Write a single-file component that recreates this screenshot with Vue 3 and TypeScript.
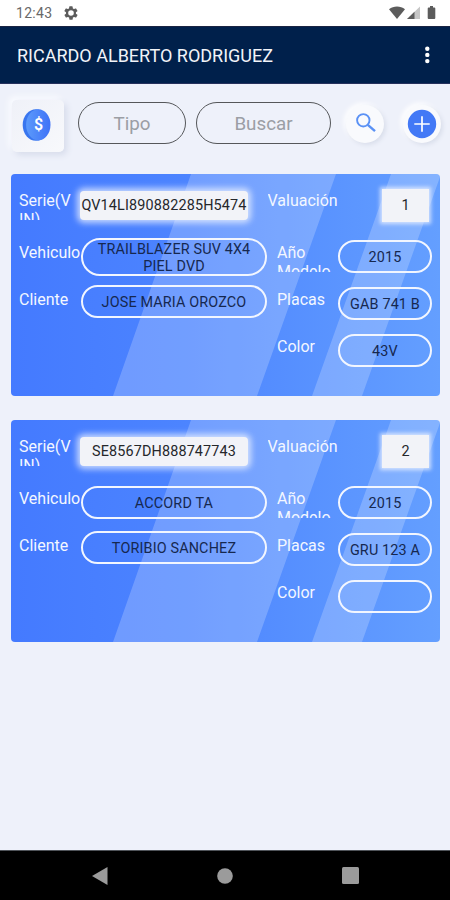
<script setup lang="ts">
interface Vehicle {
  serial: string
  valuation: string
  vehicle: string
  client: string
  year: string
  plates: string
  color: string
}

const vehicles: Vehicle[] = [
  {
    serial: 'QV14LI890882285H5474',
    valuation: '1',
    vehicle: 'TRAILBLAZER SUV 4X4 PIEL DVD',
    client: 'JOSE MARIA OROZCO',
    year: '2015',
    plates: 'GAB 741 B',
    color: '43V',
  },
  {
    serial: 'SE8567DH888747743',
    valuation: '2',
    vehicle: 'ACCORD TA',
    client: 'TORIBIO SANCHEZ',
    year: '2015',
    plates: 'GRU 123 A',
    color: '',
  },
]
</script>

<template>
  <div class="screen">
    <div class="status">
      <span class="clock">12:43</span>
      <svg class="gear" viewBox="0 0 24 24" width="16" height="16">
        <path fill="#5c5c5c" fill-rule="evenodd" d="M19.4 13a7.500 7.500 0 0 0 0-2l2.100-1.600a.5.5 0 0 0 .1-.7l-2-3.400a.5.5 0 0 0-.6-.2l-2.500 1a7.300 7.300 0 0 0-1.700-1l-.4-2.600a.5.5 0 0 0-.5-.5h-4a.5.5 0 0 0-.5.5L9 5.100a7.700 7.700 0 0 0-1.700 1l-2.500-1a.5.5 0 0 0-.6.2l-2 3.400a.5.5 0 0 0 .1.7L4.500 11a7.900 7.900 0 0 0 0 2l-2.100 1.600a.5.5 0 0 0-.1.7l2 3.400c.1.2.4.3.6.2l2.500-1a7.300 7.300 0 0 0 1.700 1l.4 2.600c0 .3.2.5.5.5h4c.3 0 .5-.2.500-.5l.4-2.600a7.700 7.700 0 0 0 1.700-1l2.500 1c.2.1.5 0 .6-.2l2-3.400a.5.5 0 0 0-.1-.7zM12 16.200a4.200 4.200 0 1 1 0-8.400a4.200 4.200 0 0 1 0 8.400z" />
      </svg>
      <svg class="signals" viewBox="0 0 50 16" width="50" height="16">
        <path fill="#5c5c5c" d="M0 4.200C4.500.7 11.500.7 16 4.200L8 14z" />
        <path fill="#c6c6c6" d="M31 1.500V14H18z" />
        <path fill="#5c5c5c" d="M25.500 6.800V14H18z" />
        <path fill="#5c5c5c" d="M41 1h3v1.500h1.300a1 1 0 0 1 1 1V13a1 1 0 0 1-1 1h-5.600a1 1 0 0 1-1-1V3.500a1 1 0 0 1 1-1H41z" />
      </svg>
    </div>

    <header class="appbar">
      <h1>RICARDO ALBERTO RODRIGUEZ</h1>
      <svg class="dots" viewBox="0 0 6 20" width="6" height="20">
        <circle cx="3.300" cy="3.700" r="2.200" /><circle cx="3.300" cy="9.900" r="2.200" /><circle cx="3.300" cy="16.100" r="2.200" />
      </svg>
    </header>

    <div class="toolbar">
      <button class="tile">
        <svg viewBox="0 0 30 34" width="30" height="34">
          <defs>
            <linearGradient id="coin" x1="0" x2="1" y1="0" y2="0">
              <stop offset="0" stop-color="#5b9afb" /><stop offset="1" stop-color="#3f72f7" />
            </linearGradient>
          </defs>
          <ellipse cx="14" cy="17" rx="13.300" ry="15.800" fill="#3976ef" />
          <ellipse cx="16.300" cy="16.800" rx="12.200" ry="15.600" fill="url(#coin)" />
          <text x="16.500" y="22.300" text-anchor="middle" fill="#fff" font-family="Roboto, sans-serif" font-size="16" font-weight="600">$</text>
        </svg>
      </button>
      <div class="input type">Tipo</div>
      <div class="input search">Buscar</div>
      <button class="round find">
        <svg viewBox="0 0 22 22" width="22" height="22" fill="none" stroke="#5a91f5">
          <circle cx="8.300" cy="8.300" r="6.200" stroke-width="1.900" />
          <path d="M12.800 12.800l7.200 6.400" stroke-width="2.400" />
        </svg>
      </button>
      <button class="round add">
        <svg viewBox="0 0 30 30" width="30" height="30">
          <circle cx="15" cy="15" r="14.200" fill="#4379f6" />
          <path d="M15 7.300v15.400M7.300 15h15.400" stroke="#fff" stroke-width="1.700" />
        </svg>
      </button>
    </div>

    <main class="list">
      <article v-for="v in vehicles" :key="v.serial" class="card">
        <svg class="stripes" viewBox="0 0 429 222" preserveAspectRatio="none">
          <defs>
            <linearGradient :id="'base' + v.valuation" x1="0" x2="1" y1="0" y2="0">
              <stop offset="0" stop-color="#447aff" /><stop offset=".4" stop-color="#4c84ff" />
              <stop offset="1" stop-color="#649fff" />
            </linearGradient>
          </defs>
          <path :fill="'url(#base' + v.valuation + ')'" d="M0 0h429v222H0z" />
          <path fill="#fff" fill-opacity=".21" d="M180 0H325L246 222H102zM380 0H429V3L351 222H301z" />
        </svg>
        <div class="head">
          <span class="label">Serie(V<br />IN)</span>
          <span class="serial">{{ v.serial }}</span>
          <span class="label valuation">Valuación</span>
          <span class="number">{{ v.valuation }}</span>
        </div>
        <div class="body">
          <div class="column left">
            <div class="row">
              <span class="label">Vehiculo</span>
              <span class="pill wide" :class="{ tall: v.vehicle.length > 20 }">{{ v.vehicle }}</span>
            </div>
            <div class="row">
              <span class="label">Cliente</span>
              <span class="pill wide client">{{ v.client }}</span>
            </div>
          </div>
          <div class="column right">
            <div class="row">
              <span class="label">Año<br />Modelo</span>
              <span class="pill">{{ v.year }}</span>
            </div>
            <div class="row">
              <span class="label">Placas</span>
              <span class="pill">{{ v.plates }}</span>
            </div>
            <div class="row">
              <span class="label">Color</span>
              <span class="pill">{{ v.color }}</span>
            </div>
          </div>
        </div>
      </article>
    </main>

    <nav class="navbar">
      <svg viewBox="0 0 16 18" width="16" height="18"><path d="M0 9L15.500 0v18z" /></svg>
      <svg viewBox="0 0 16 16" width="16" height="16"><circle cx="8" cy="8" r="7.800" /></svg>
      <svg viewBox="0 0 17 17" width="17" height="17"><rect width="17" height="17" rx="1.500" /></svg>
    </nav>
  </div>
</template>

<style>
body {
  margin: 0;
}
</style>

<style scoped>
* {
  box-sizing: border-box;
}
.screen {
  width: 450px;
  height: 900px;
  display: flex;
  flex-direction: column;
  background: #eef1fa;
  font-family: Roboto, "Liberation Sans", sans-serif;
  overflow: hidden;
}
.status {
  height: 26px;
  flex: none;
  display: flex;
  align-items: center;
  padding: 0 14px 0 16px;
  background: #fff;
}
.clock {
  width: 47px;
  font-size: 14px;
  letter-spacing: 0.3px;
  color: #696969;
}
.signals {
  margin-left: auto;
  margin-right: -3px;
}
.appbar {
  height: 58px;
  flex: none;
  display: flex;
  align-items: center;
  justify-content: space-between;
  padding: 0 20px 0 17px;
  background: #00204b;
  border-top: 1px solid #1a2442;
  border-bottom: 1px solid #26315c;
}
h1 {
  margin: 0;
  color: #f1f3f8;
  font-size: 18px;
  font-weight: 400;
  white-space: nowrap;
}
.dots {
  fill: #fff;
}
.toolbar {
  height: 90px;
  flex: none;
  display: flex;
  align-items: flex-start;
  padding: 16px 0 0 12px;
}
button {
  border: 0;
  padding: 0;
  display: flex;
  align-items: center;
  justify-content: center;
}
.tile {
  width: 52px;
  height: 52px;
  border-radius: 5px;
  background: linear-gradient(135deg, #eff1f8, #f8f9fc);
  box-shadow: 3px 3px 6px #d7dceb, -3px -3px 6px #fbfcff;
}
.tile svg {
  margin: -3px 0 0 -3px;
}
.input {
  height: 42px;
  margin-top: 2px;
  border: 1px solid #55575a;
  border-radius: 21px;
  display: flex;
  align-items: center;
  justify-content: center;
  color: #9b9ea5;
  font-size: 18.800px;
  padding-top: 2px;
}
.type {
  width: 108px;
  margin-left: 14px;
}
.search {
  width: 135px;
  margin-left: 10px;
}
.round {
  width: 38px;
  height: 38px;
  margin-top: 5px;
  border-radius: 50%;
  background: #f9fafd;
  box-shadow: 2px 2px 4px #d9deeb, -2px -2px 5px #fff;
}
.find {
  margin-left: 15px;
}
.find svg {
  margin: -3px 0 0 1px;
}
.add {
  margin-left: 19px;
}
.list {
  flex: 1;
  display: flex;
  flex-direction: column;
  gap: 24px;
  padding-left: 11px;
}
.card {
  position: relative;
  width: 429px;
  height: 222px;
  border-radius: 4px;
  overflow: hidden;
}
.stripes {
  position: absolute;
  inset: 0;
  width: 100%;
  height: 100%;
}
.head,
.body {
  position: relative;
  display: flex;
  align-items: flex-start;
  padding-left: 8px;
}
.head {
  height: 64px;
  padding-top: 17px;
}
.label {
  flex: none;
  width: 62px;
  height: 29px;
  overflow: hidden;
  color: #f3f7ff;
  font-size: 16px;
  line-height: 19px;
  white-space: nowrap;
}
.serial,
.number,
.pill {
  display: flex;
  align-items: center;
  justify-content: center;
  text-align: center;
  font-size: 14.400px;
  line-height: 17px;
  letter-spacing: 0.15px;
}
.serial {
  width: 168px;
  height: 29px;
  margin-left: -1px;
  border-radius: 4px;
  background: #f2f3f8;
  box-shadow: 0 0 6px 3px rgba(242, 245, 255, 0.75);
  color: #25272b;
  white-space: nowrap;
}
.valuation {
  width: 75px;
  margin-left: 19.500px;
}
.number {
  width: 47px;
  height: 33px;
  margin: -2px 0 0 39.500px;
  background: #f2f3f8;
  box-shadow: 0 0 4px 2px rgba(242, 245, 255, 0.75);
  color: #25272b;
}
.column {
  display: flex;
  flex-direction: column;
}
.left {
  width: 258px;
}
.row {
  display: flex;
  height: 47px;
}
.row .label {
  margin-top: 5px;
}
.right .label {
  width: 61px;
}
.pill {
  width: 94px;
  height: 33px;
  margin-top: 2px;
  padding-top: 1px;
  border: 2px solid #f2f6ff;
  border-radius: 17px;
  color: #16284f;
}
.wide {
  width: 186px;
}
.tall {
  height: 38px;
  margin-top: 0;
  padding: 1px 8px 0;
  border-radius: 19px;
}
.client {
  margin-top: 0;
}
.navbar {
  height: 50px;
  flex: none;
  display: flex;
  align-items: center;
  justify-content: space-between;
  padding: 0 91px 0 92px;
  background: #000;
  border-top: 1px solid #50545a;
}
.navbar svg {
  fill: #9b9b9b;
}
</style>
